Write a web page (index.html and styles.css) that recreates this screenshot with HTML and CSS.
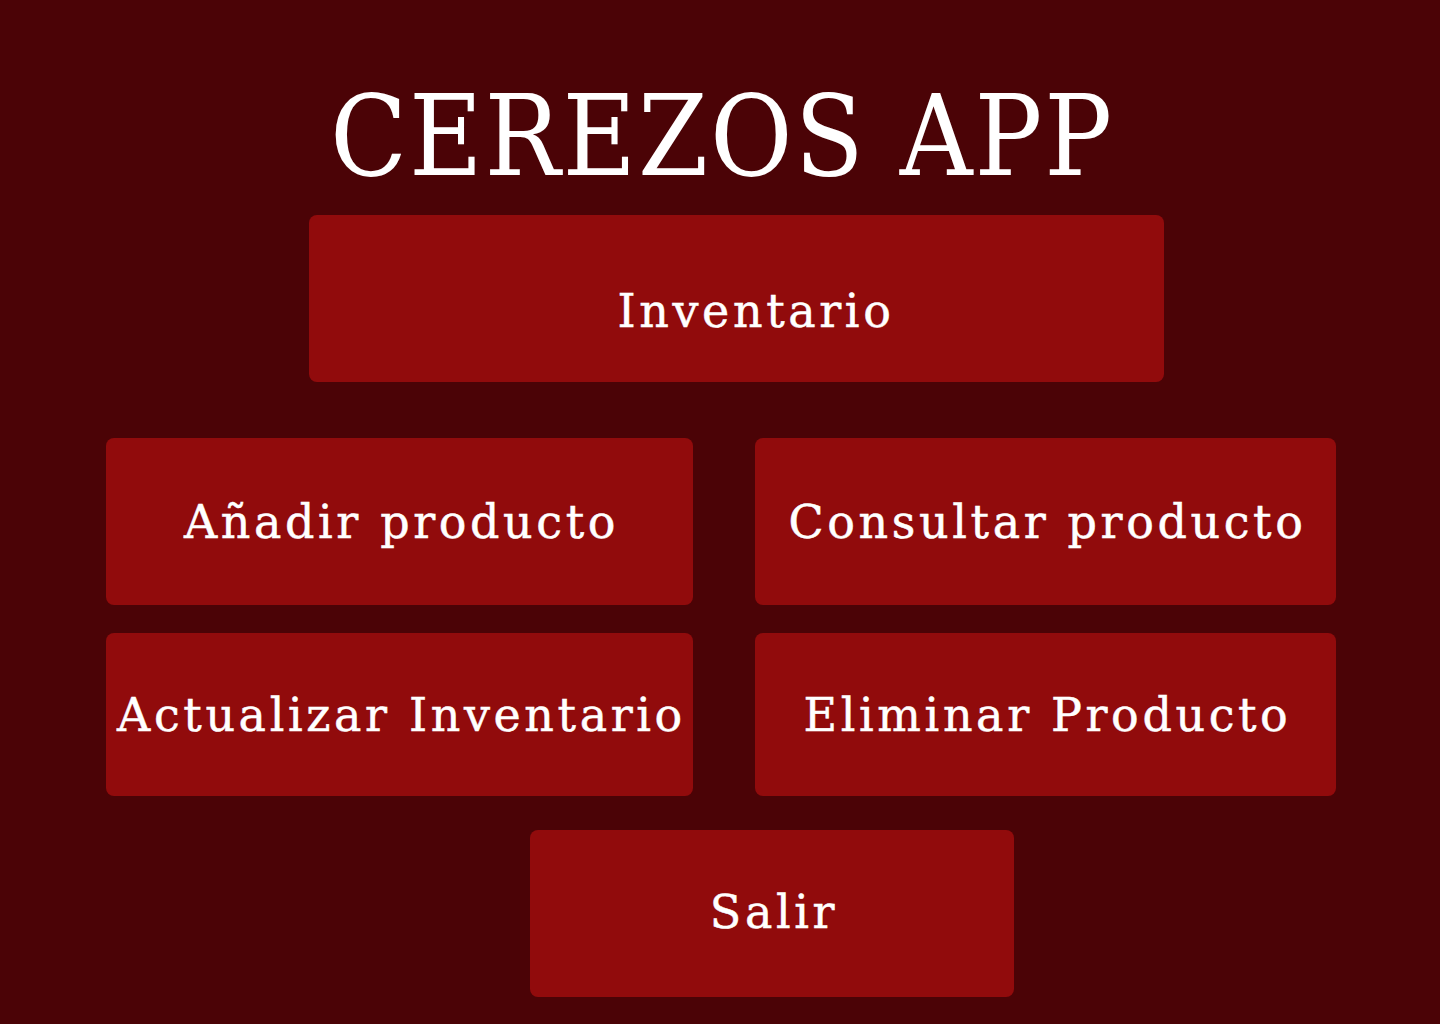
FILE: index.html
```html
<!DOCTYPE html>
<html lang="es">
<head>
  <meta charset="UTF-8" />
  <meta name="viewport" content="width=device-width, initial-scale=1.0" />
  <title>Cerezos App</title>
  <link rel="stylesheet" href="styles.css">
</head>
<body>
  <main class="menu">
    <h1>CEREZOS APP</h1>
    <button class="btn btn-main">Inventario</button>
    <div class="grid">
      <button class="btn">Añadir producto</button>
      <button class="btn">Consultar producto</button>
      <button class="btn btn-short">Actualizar Inventario</button>
      <button class="btn btn-short">Eliminar Producto</button>
    </div>
    <button class="btn btn-exit">Salir</button>
  </main>
</body>
</html>
```

FILE: styles.css
```css
* {
  margin: 0; padding: 0; box-sizing: border-box;
}
body {
  background: #4b0306; color: #fff;
  font-family: "DejaVu Serif", serif;
  width: 1440px; height: 1024px; overflow: hidden;
}
.menu {
  display: flex; flex-direction: column;
  padding: 66px 104px 0 106px;
}
h1 {
  font-family: "DejaVu Serif Condensed", "DejaVu Serif", serif;
  font-stretch: condensed;
  font-weight: normal; font-size: 112px; line-height: 140px;
  text-align: center; margin-left: 116px; width: 1000px;
  letter-spacing: 2px;
}
.btn {
  background: #910b0c; color: #fff; border: none;
  border-radius: 8px; height: 167px;
  padding: 0 0 0 4px;
  font-family: "DejaVu Serif", serif;
  font-size: 46px; letter-spacing: 3.6px;
  -webkit-text-stroke: 0.5px #fff;
  cursor: pointer;
}
.btn-main {
  margin-left: 203px; width: 855px; margin-top: 9px;
  padding: 25px 0 0 39px;
}
.grid {
  display: grid; grid-template-columns: 587px 581px;
  column-gap: 62px; row-gap: 28px; margin-top: 56px;
}
.btn-short {
  height: 163px;
}
.btn-exit {
  margin-left: 424px; width: 484px; margin-top: 34px;
  padding-bottom: 4px;
}
```
